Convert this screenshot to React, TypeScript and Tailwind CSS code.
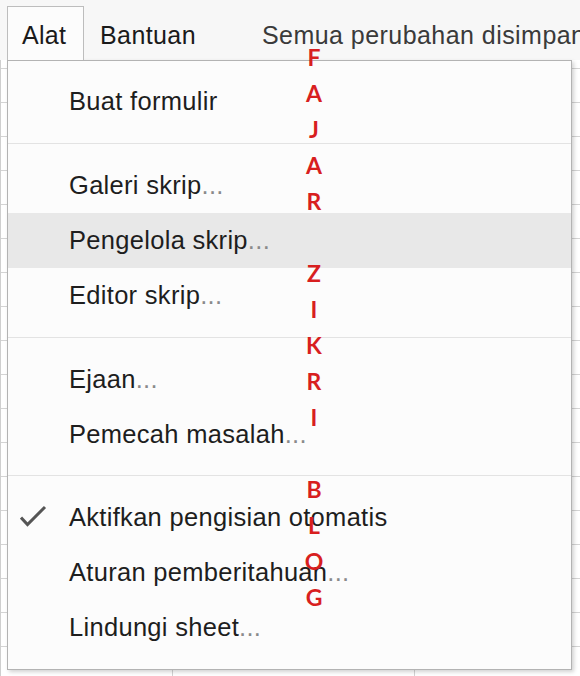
import React from "react";

const font = { fontFamily: '"Liberation Sans", Arial, sans-serif' };

function Dots() {
  return <span className="text-[#8a8a8a]">...</span>;
}

function Item({ children, active = false, checked = false }: { children: React.ReactNode; active?: boolean; checked?: boolean }) {
  return (
    <div className={`relative flex h-[55px] items-center pl-[61px] text-[25.5px] leading-[55px] tracking-[0.3px] text-[#1e1e1e] whitespace-nowrap ${active ? "bg-[#e8e8e8]" : ""}`}>
      {checked && (
        <svg className="absolute left-[12px] top-[15px]" width="28" height="24" viewBox="0 0 28 24">
          <path d="M1 12.5 L7.5 19.5 L25 2" fill="none" stroke="#555" strokeWidth="3" />
        </svg>
      )}
      {children}
    </div>
  );
}

const letters = ["F", "A", "J", "A", "R", "", "Z", "I", "K", "R", "I", "", "B", "L", "O", "G"];

export default function App() {
  const rows = Array.from({ length: 18 });
  return (
    <div className="relative h-[676px] w-[580px] overflow-hidden bg-white" style={font}>
      {/* header */}
      <div className="flex h-[60px] items-start overflow-hidden whitespace-nowrap bg-[#f7f7f7]">
        <div className="relative z-20 ml-[7px] mt-[6px] h-[55px] w-[77px] shrink-0 border-l border-r border-t border-[#bdbdbd] bg-[#fcfcfc] pl-[14px] pt-[13px] text-[25px] leading-[30px] tracking-[0.3px] text-[#1a1a1a]">
          Alat
        </div>
        <div className="ml-[16px] mt-[20px] shrink-0 text-[25px] leading-[30px] tracking-[0.4px] text-[#1a1a1a]">Bantuan</div>
        <div className="ml-[66px] mt-[20px] shrink-0 text-[25px] leading-[30px] tracking-[0.45px] text-[#3a3a3a]">Semua perubahan disimpan</div>
      </div>

      {/* sheet grid behind */}
      <div className="flex flex-col border-l border-[#cfcfcf]">
        <div className="h-[9px] border-b border-[#d4d4d4]" />
        {rows.map((_, i) => (
          <div key={i} className="flex h-[34px] border-b border-[#d4d4d4]">
            <div className="w-[172px] border-r border-[#d4d4d4]" />
            <div className="w-[242px] border-r border-[#d4d4d4]" />
            <div className="flex-1" />
          </div>
        ))}
      </div>

      {/* dropdown menu */}
      <div className="absolute left-[7px] top-[60px] z-10 flex h-[610px] w-[565px] flex-col border border-[#b3b3b3] bg-[#fcfcfc] shadow-[2px_2px_4px_rgba(0,0,0,0.18)]">
        <div className="pb-[14px] pt-[13px]">
          <Item>Buat formulir</Item>
        </div>
        <div className="h-px bg-[#e3e3e3]" />
        <div className="py-[14px]">
          <Item>
            Galeri skrip<Dots />
          </Item>
          <Item active>
            Pengelola skrip<Dots />
          </Item>
          <Item>
            Editor skrip<Dots />
          </Item>
        </div>
        <div className="h-px bg-[#e3e3e3]" />
        <div className="pb-[13px] pt-[14px]">
          <Item>
            Ejaan<Dots />
          </Item>
          <Item>
            Pemecah masalah<Dots />
          </Item>
        </div>
        <div className="h-px bg-[#e3e3e3]" />
        <div className="py-[14px]">
          <Item checked>Aktifkan pengisian otomatis</Item>
          <Item>
            Aturan pemberitahuan<Dots />
          </Item>
          <Item>
            Lindungi sheet<Dots />
          </Item>
        </div>
      </div>

      {/* watermark letters */}
      <div
        className="absolute left-[300px] top-[39px] z-30 flex w-[28px] flex-col text-center text-[23px] font-bold text-[#d81f1f]"
        style={{ fontFamily: 'Lato, "Liberation Sans", sans-serif' }}
      >
        {letters.map((l, i) => (
          <div key={i} className="h-[36px] leading-[36px]">
            {l}
          </div>
        ))}
      </div>
    </div>
  );
}
